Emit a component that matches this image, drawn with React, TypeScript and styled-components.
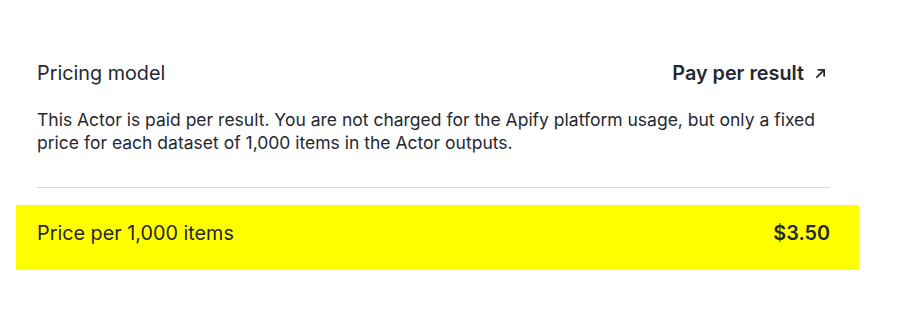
import React from "react";
import styled, { createGlobalStyle } from "styled-components";

const Global = createGlobalStyle`
  html, body { margin: 0; padding: 0; background: #ffffff; }
  body { font-family: Inter, "Noto Sans", sans-serif; color: #252832; }
`;

const Section = styled.section`
  width: 793px;
  padding: 61px 0 0 37px;
  display: flex;
  flex-direction: column;
`;

const HeaderRow = styled.div`
  display: flex;
  justify-content: space-between;
  align-items: center;
  height: 24px;
`;

const Label = styled.span`
  font-size: 19.8px;
  line-height: 24px;
  color: #252832;
`;

const ModelLink = styled.a`
  display: inline-flex;
  align-items: center;
  gap: 11px;
  font-size: 19.8px;
  line-height: 24px;
  font-weight: 600;
  color: #252832;
  text-decoration: none;
  padding-right: 4px;
`;

const Description = styled.p`
  margin: 23px 0 0;
  font-size: 17.5px;
  line-height: 23px;
  color: #252832;
`;

const Divider = styled.hr`
  margin: 33px 0 0;
  border: none;
  border-top: 1px solid #d9dadd;
  height: 0;
`;

const PriceRow = styled.div`
  margin: 17px -29px 0 -21px;
  padding: 0 29px 0 21px;
  height: 65px;
  background: #ffff00;
  display: flex;
  justify-content: space-between;
  align-items: center;
`;

const PriceLabel = styled.span`
  font-size: 19.8px;
  line-height: 24px;
  color: #252832;
  margin-top: -10px;
`;

const PriceValue = styled.span`
  font-size: 19.8px;
  line-height: 24px;
  font-weight: 600;
  color: #252832;
  margin-top: -10px;
`;

const ArrowIcon = () => (
  <svg width="11" height="11" viewBox="0 0 12 12" fill="none" stroke="#252832" strokeWidth="1.9" strokeLinecap="round" strokeLinejoin="round">
    <path d="M2 10 L10 2" />
    <path d="M3.5 2 H10 V8.5" />
  </svg>
);

export default function App() {
  return (
    <>
      <Global />
      <Section>
        <HeaderRow>
          <Label>Pricing model</Label>
          <ModelLink href="#">
            Pay per result
            <ArrowIcon />
          </ModelLink>
        </HeaderRow>
        <Description>
          This Actor is paid per result. You are not charged for the Apify platform usage, but only a fixed
          <br />
          price for each dataset of 1,000 items in the Actor outputs.
        </Description>
        <Divider />
        <PriceRow>
          <PriceLabel>Price per 1,000 items</PriceLabel>
          <PriceValue>$3.50</PriceValue>
        </PriceRow>
      </Section>
    </>
  );
}
